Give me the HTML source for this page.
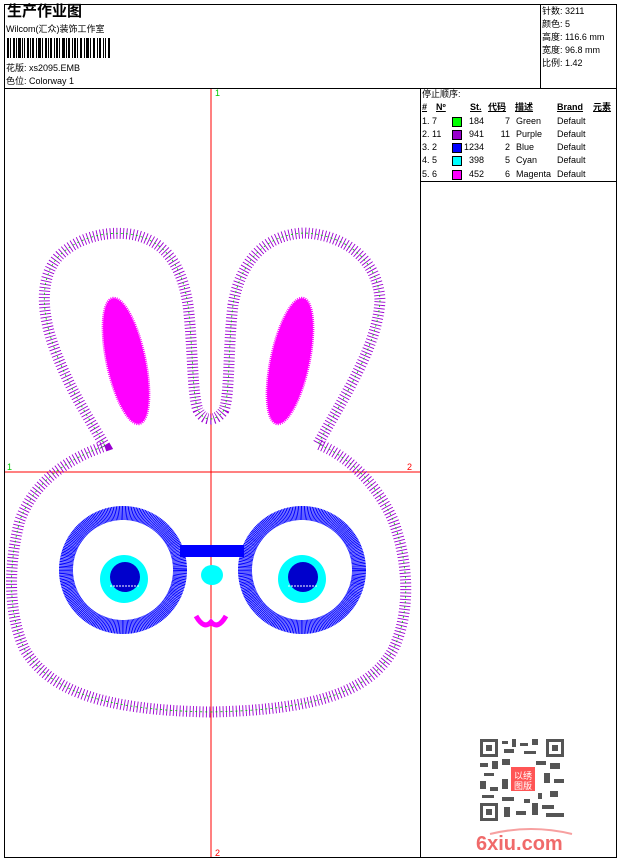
<!DOCTYPE html>
<html><head><meta charset="utf-8"><style>
body{margin:0;width:620px;height:860px;background:#fff;position:relative;overflow:hidden;font-family:"Liberation Sans","Noto Sans CJK SC",sans-serif;font-size:9px;color:#000}
.a{position:absolute;white-space:nowrap;line-height:1}
.ln{position:absolute;background:#000}
</style></head><body>
<div class="ln" style="left:4px;top:4px;width:613px;height:1px"></div>
<div class="ln" style="left:4px;top:857px;width:613px;height:1px"></div>
<div class="ln" style="left:4px;top:4px;width:1px;height:854px"></div>
<div class="ln" style="left:616px;top:4px;width:1px;height:854px"></div>
<div class="ln" style="left:4px;top:88px;width:613px;height:1px"></div>
<div class="ln" style="left:540px;top:4px;width:1px;height:85px"></div>
<div class="ln" style="left:420px;top:88px;width:1px;height:770px"></div>
<div class="ln" style="left:420px;top:181px;width:197px;height:1px"></div>

<div class="a" style="left:7px;top:4px;font-size:15px;font-weight:bold">生产作业图</div>
<div class="a" style="left:6px;top:25px;font-size:9px">Wilcom(汇众)装饰工作室</div>
<svg class="a" style="left:7px;top:38px" width="105" height="20">
<g fill="#000">
<rect x="0" y="0" width="2" height="20"/><rect x="3" y="0" width="1" height="20"/><rect x="6" y="0" width="2" height="20"/><rect x="9" y="0" width="1" height="20"/><rect x="11" y="0" width="3" height="20"/><rect x="15" y="0" width="1" height="20"/><rect x="17" y="0" width="1" height="20"/><rect x="20" y="0" width="2" height="20"/><rect x="23" y="0" width="1" height="20"/><rect x="25" y="0" width="2" height="20"/><rect x="29" y="0" width="1" height="20"/><rect x="31" y="0" width="3" height="20"/><rect x="35" y="0" width="1" height="20"/><rect x="38" y="0" width="2" height="20"/><rect x="41" y="0" width="1" height="20"/><rect x="43" y="0" width="2" height="20"/><rect x="47" y="0" width="1" height="20"/><rect x="49" y="0" width="2" height="20"/><rect x="52" y="0" width="1" height="20"/><rect x="55" y="0" width="3" height="20"/><rect x="59" y="0" width="1" height="20"/><rect x="61" y="0" width="2" height="20"/><rect x="65" y="0" width="1" height="20"/><rect x="67" y="0" width="2" height="20"/><rect x="70" y="0" width="1" height="20"/><rect x="73" y="0" width="2" height="20"/><rect x="77" y="0" width="1" height="20"/><rect x="79" y="0" width="3" height="20"/><rect x="83" y="0" width="1" height="20"/><rect x="86" y="0" width="2" height="20"/><rect x="90" y="0" width="1" height="20"/><rect x="92" y="0" width="2" height="20"/><rect x="96" y="0" width="1" height="20"/><rect x="98" y="0" width="1" height="20"/><rect x="101" y="0" width="2" height="20"/>
</g></svg>
<div class="a" style="left:6px;top:64px">花版: xs2095.EMB</div>
<div class="a" style="left:6px;top:77px">色位: Colorway 1</div>

<div class="a" style="left:542px;top:7px">针数: 3211</div>
<div class="a" style="left:542px;top:20px">颜色: 5</div>
<div class="a" style="left:542px;top:33px">高度: 116.6 mm</div>
<div class="a" style="left:542px;top:46px">宽度: 96.8 mm</div>
<div class="a" style="left:542px;top:59px">比例: 1.42</div>

<div class="a" style="left:422px;top:90px">停止顺序:</div>
<div class="a" style="left:422px;top:103px;font-weight:bold;text-decoration:underline">#</div>
<div class="a" style="left:436px;top:103px;font-weight:bold;text-decoration:underline">Nº</div>
<div class="a" style="left:470px;top:103px;font-weight:bold;text-decoration:underline">St.</div>
<div class="a" style="left:488px;top:103px;font-weight:bold;text-decoration:underline">代码</div>
<div class="a" style="left:515px;top:103px;font-weight:bold;text-decoration:underline">描述</div>
<div class="a" style="left:557px;top:103px;font-weight:bold;text-decoration:underline">Brand</div>
<div class="a" style="left:593px;top:103px;font-weight:bold;text-decoration:underline">元素</div>
<div style="position:absolute;left:0;top:117px">
<div class="a" style="left:422px;top:0">1. 7</div><div class="a" style="left:452px;top:0;width:8px;height:8px;background:#0f0;border:1px solid #000"></div><div class="a" style="left:466px;top:0;width:18px;text-align:right">184</div><div class="a" style="left:496px;top:0;width:14px;text-align:right">7</div><div class="a" style="left:516px;top:0">Green</div><div class="a" style="left:557px;top:0">Default</div>
<div class="a" style="left:422px;top:13px">2. 11</div><div class="a" style="left:452px;top:13px;width:8px;height:8px;background:#90c;border:1px solid #000"></div><div class="a" style="left:466px;top:13px;width:18px;text-align:right">941</div><div class="a" style="left:496px;top:13px;width:14px;text-align:right">11</div><div class="a" style="left:516px;top:13px">Purple</div><div class="a" style="left:557px;top:13px">Default</div>
<div class="a" style="left:422px;top:26px">3. 2</div><div class="a" style="left:452px;top:26px;width:8px;height:8px;background:#00f;border:1px solid #000"></div><div class="a" style="left:464px;top:26px;width:20px;text-align:right">1234</div><div class="a" style="left:496px;top:26px;width:14px;text-align:right">2</div><div class="a" style="left:516px;top:26px">Blue</div><div class="a" style="left:557px;top:26px">Default</div>
<div class="a" style="left:422px;top:39px">4. 5</div><div class="a" style="left:452px;top:39px;width:8px;height:8px;background:#0ff;border:1px solid #000"></div><div class="a" style="left:466px;top:39px;width:18px;text-align:right">398</div><div class="a" style="left:496px;top:39px;width:14px;text-align:right">5</div><div class="a" style="left:516px;top:39px">Cyan</div><div class="a" style="left:557px;top:39px">Default</div>
<div class="a" style="left:422px;top:53px">5. 6</div><div class="a" style="left:452px;top:53px;width:8px;height:8px;background:#f0f;border:1px solid #000"></div><div class="a" style="left:466px;top:53px;width:18px;text-align:right">452</div><div class="a" style="left:496px;top:53px;width:14px;text-align:right">6</div><div class="a" style="left:516px;top:53px">Magenta</div><div class="a" style="left:557px;top:53px">Default</div>
</div>

<svg class="a" style="left:0;top:0" width="420" height="860">
<line x1="211" y1="89" x2="211" y2="857" stroke="#f00" stroke-width="1"/>
<line x1="5" y1="472" x2="420" y2="472" stroke="#f00" stroke-width="1"/>
<text x="215" y="96" fill="#0c0" font-size="9" font-family="Liberation Sans">1</text>
<text x="215" y="856" fill="#f00" font-size="9" font-family="Liberation Sans">2</text>
<text x="7" y="470" fill="#0c0" font-size="9" font-family="Liberation Sans">1</text>
<text x="407" y="470" fill="#f00" font-size="9" font-family="Liberation Sans">2</text>
<path d="M105,446 C90,420 70,390 55,350 C40,310 40,275 60,255 C80,236 110,230 135,235 C165,242 182,265 188,305 C193,345 192,395 198,410 C204,422 216,422 224,410 C230,395 228,345 233,305 C240,262 265,234 305,233 C345,235 378,260 380,300 C378,345 345,395 318,444 C345,455 375,480 393,520 C410,565 410,615 393,650 C370,690 320,710 210,712 C100,710 50,690 25,650 C8,615 8,565 20,520 C35,480 70,458 105,446 Z" fill="none" stroke="#9a00d0" stroke-width="11" stroke-dasharray="0.9 2.4"/>
<path d="M105,446 C90,420 70,390 55,350 C40,310 40,275 60,255 C80,236 110,230 135,235 C165,242 182,265 188,305 C193,345 192,395 198,410 C204,422 216,422 224,410 C230,395 228,345 233,305 C240,262 265,234 305,233 C345,235 378,260 380,300 C378,345 345,395 318,444 C345,455 375,480 393,520 C410,565 410,615 393,650 C370,690 320,710 210,712 C100,710 50,690 25,650 C8,615 8,565 20,520 C35,480 70,458 105,446 Z" fill="none" stroke="#0c0" stroke-width="0.8" stroke-dasharray="2 3"/>
<ellipse cx="126" cy="361" rx="19" ry="64" transform="rotate(-12 126 361)" fill="#f0f" stroke="#f0f" stroke-width="3" stroke-dasharray="1 1"/>
<ellipse cx="290" cy="361" rx="19" ry="64" transform="rotate(12 290 361)" fill="#f0f" stroke="#f0f" stroke-width="3" stroke-dasharray="1 1"/>
<circle cx="123" cy="570" r="57" fill="none" stroke="#00f" stroke-width="14" stroke-dasharray="1 0.4"/>
<circle cx="302" cy="570" r="57" fill="none" stroke="#00f" stroke-width="14" stroke-dasharray="1 0.4"/>
<rect x="180" y="545" width="64" height="12" fill="#00f"/>
<circle cx="124" cy="579" r="24" fill="#0ff"/>
<circle cx="125" cy="577" r="15" fill="#00c"/>
<line x1="110" y1="586" x2="140" y2="586" stroke="#fff" stroke-dasharray="2 1"/>
<circle cx="302" cy="579" r="24" fill="#0ff"/>
<circle cx="303" cy="577" r="15" fill="#00c"/>
<line x1="288" y1="586" x2="318" y2="586" stroke="#fff" stroke-dasharray="2 1"/>
<ellipse cx="212" cy="575" rx="11" ry="10" fill="#0ff"/>
<path d="M196,616 Q204,630 211,622 Q218,630 226,616" fill="none" stroke="#f0f" stroke-width="5"/>
</svg>

<svg class="a" style="left:480px;top:739px" width="84" height="82">
<rect width="84" height="82" fill="#fff"/>
<g fill="#555">
<rect x="0" y="0" width="18" height="18"/><rect x="3" y="3" width="12" height="12" fill="#fff"/><rect x="6" y="6" width="6" height="6"/>
<rect x="66" y="0" width="18" height="18"/><rect x="69" y="3" width="12" height="12" fill="#fff"/><rect x="72" y="6" width="6" height="6"/>
<rect x="0" y="64" width="18" height="18"/><rect x="3" y="67" width="12" height="12" fill="#fff"/><rect x="6" y="70" width="6" height="6"/>
<rect x="22" y="2" width="6" height="3"/><rect x="32" y="0" width="4" height="8"/><rect x="40" y="4" width="8" height="3"/><rect x="52" y="0" width="6" height="6"/><rect x="24" y="10" width="10" height="4"/><rect x="44" y="12" width="12" height="3"/>
<rect x="0" y="24" width="8" height="4"/><rect x="12" y="22" width="6" height="8"/><rect x="4" y="34" width="10" height="3"/><rect x="0" y="42" width="6" height="8"/><rect x="10" y="48" width="8" height="4"/><rect x="2" y="56" width="12" height="3"/>
<rect x="22" y="20" width="8" height="6"/><rect x="56" y="22" width="10" height="4"/><rect x="70" y="24" width="10" height="6"/><rect x="64" y="34" width="6" height="10"/><rect x="74" y="40" width="10" height="4"/><rect x="70" y="52" width="8" height="6"/>
<rect x="22" y="40" width="6" height="10"/><rect x="22" y="58" width="12" height="4"/><rect x="24" y="68" width="6" height="10"/><rect x="36" y="72" width="10" height="4"/><rect x="52" y="64" width="6" height="12"/><rect x="62" y="66" width="12" height="4"/><rect x="66" y="74" width="18" height="4"/><rect x="44" y="60" width="6" height="4"/><rect x="58" y="54" width="4" height="6"/>
</g>
<rect x="31" y="28" width="24" height="24" fill="#f55"/>
<text x="34" y="40" fill="#fff" font-size="9" font-family="Noto Sans CJK SC">以</text><text x="43" y="40" fill="#fff" font-size="9" font-family="Noto Sans CJK SC">绣</text>
<text x="34" y="50" fill="#fff" font-size="9" font-family="Noto Sans CJK SC">图</text><text x="43" y="50" fill="#fff" font-size="9" font-family="Noto Sans CJK SC">版</text>
</svg>
<svg class="a" style="left:476px;top:826px" width="100" height="28">
<path d="M14,8 Q55,-2 96,8" fill="none" stroke="#f7a0a0" stroke-width="2"/>
<text x="0" y="24" fill="#f06a6a" font-size="20" font-weight="bold" font-family="Liberation Sans">6xiu.com</text>
</svg>
</body></html>
